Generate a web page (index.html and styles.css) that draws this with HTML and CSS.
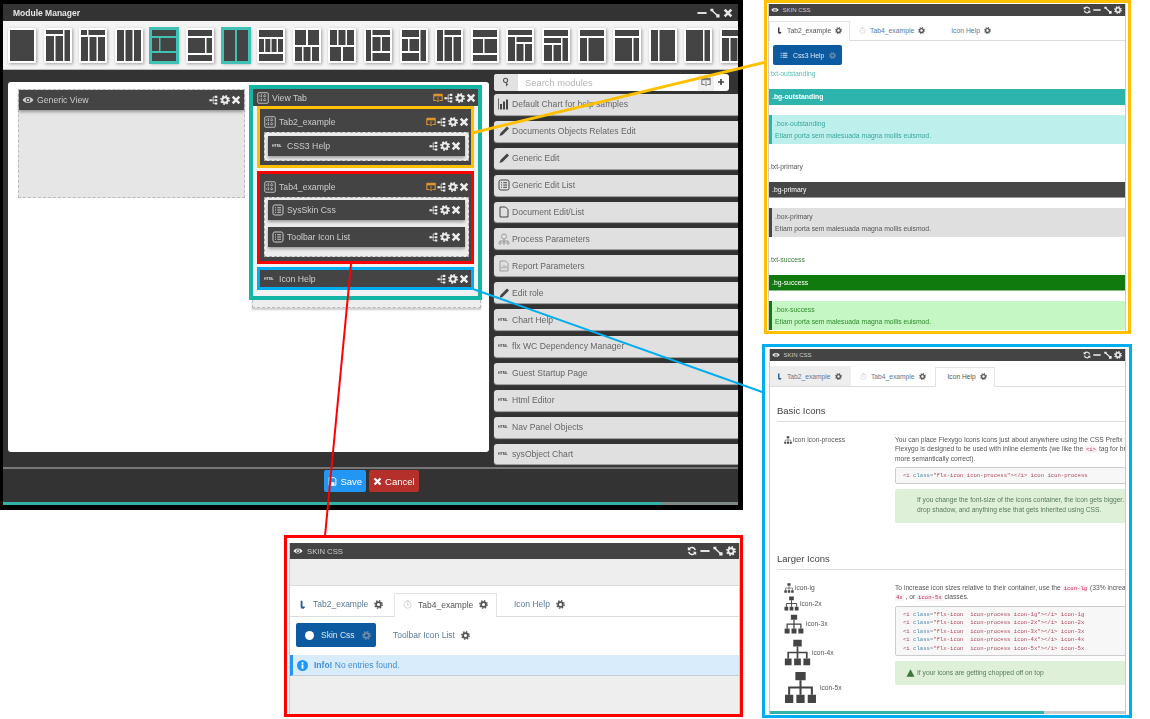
FILE: index.html
```html
<!DOCTYPE html>
<html lang="en">
<head>
  <meta charset="UTF-8">
  <title>Module Manager</title>
  <link rel="stylesheet" href="styles.css">
</head>
<body>
  <!-- shared icons -->
  <svg class="defs" aria-hidden="true">
    <symbol id="gear" viewBox="0 0 24 24"><circle cx="12" cy="12" r="6.5" fill="none" stroke="currentColor" stroke-width="4.5"/><circle cx="12" cy="12" r="9.8" fill="none" stroke="currentColor" stroke-width="4" stroke-dasharray="3.8 3.9"/></symbol>
    <symbol id="tree" viewBox="0 0 24 24"><path d="M1 10h6v5H1zM14 2h6v5h-6zM14 10h6v5h-6zM14 18h6v5h-6z" fill="currentColor"/><path d="M7 12.500h7M10 4.500v16M10 4.500h4M10 20.500h4" fill="none" stroke="currentColor" stroke-width="1.800"/></symbol>
    <symbol id="close" viewBox="0 0 24 24"><path d="M4 4l16 16M20 4L4 20" stroke="currentColor" stroke-width="6" fill="none"/></symbol>
    <symbol id="eye" viewBox="0 0 24 24"><path d="M1 12c5-8 17-8 22 0-5 8-17 8-22 0z" fill="currentColor"/><circle cx="12" cy="12" r="4.500" fill="#444"/><circle cx="12" cy="12" r="2.500" fill="currentColor"/></symbol>
    <symbol id="list" viewBox="0 0 24 24"><rect x="2" y="2" width="20" height="20" rx="3.500" fill="none" stroke="currentColor" stroke-width="2"/><path d="M6 7.500h2M10.500 7.500H18M6 12h2M10.500 12H18M6 16.500h2M10.500 16.500H18" stroke="currentColor" stroke-width="2.200"/></symbol>
    <symbol id="tab" viewBox="0 0 24 24"><rect x="1.500" y="1.500" width="21" height="21" rx="2" fill="none" stroke="currentColor" stroke-width="1.800"/><path d="M8.500 4v16M15.500 4v16M4 8h16M4 16h16" stroke="currentColor" stroke-width="1.800" stroke-dasharray="2.500 1.500"/></symbol>
    <symbol id="tabadd" viewBox="0 0 24 24"><path d="M2 3h20v15h-5M7 18H2V3" fill="none" stroke="currentColor" stroke-width="2.500"/><path d="M2 3h20v5H2z" fill="currentColor"/><path d="M12 10v11M8 17l4 4 4-4" fill="none" stroke="currentColor" stroke-width="2"/></symbol>
    <symbol id="pencil" viewBox="0 0 24 24"><path d="M3 22l2-6L18 3l4 4L9 20z" fill="currentColor"/></symbol>
    <symbol id="chart" viewBox="0 0 24 24"><path d="M1 23V1" stroke="currentColor" stroke-width="1.500" fill="none"/><path d="M4 12h4v11H4zM10 7h4v16h-4zM16 3h4v20h-4z" fill="currentColor"/></symbol>
    <symbol id="doc" viewBox="0 0 24 24"><path d="M4 2h11l5 5v15H4z" fill="none" stroke="currentColor" stroke-width="2" stroke-linejoin="round"/></symbol>
    <symbol id="proc" viewBox="0 0 24 24"><circle cx="12" cy="7" r="5" fill="none" stroke="currentColor" stroke-width="1.500"/><path d="M12 12v4M4 16h16M4 16v2M20 16v2M12 16v2" stroke="currentColor" stroke-width="1.500" fill="none"/><path d="M2 18h4v4H2zM10 18h4v4h-4zM18 18h4v4h-4z" fill="none" stroke="currentColor" stroke-width="1.200"/></symbol>
    <symbol id="report" viewBox="0 0 24 24"><path d="M4 2h11l5 5v15H4z" fill="none" stroke="currentColor" stroke-width="1.500"/><path d="M8 17v-4M12 17v-7M16 17v-5" stroke="currentColor" stroke-width="1.500"/></symbol>
    <symbol id="key" viewBox="0 0 24 24"><circle cx="11" cy="8" r="5" fill="none" stroke="currentColor" stroke-width="2.500"/><path d="M12 13l2 9M14 18l3-1" stroke="currentColor" stroke-width="2.500" fill="none"/></symbol>
    <symbol id="plus" viewBox="0 0 24 24"><path d="M12 3v18M3 12h18" stroke="currentColor" stroke-width="5"/></symbol>
    <symbol id="refresh" viewBox="0 0 24 24"><path d="M20 10a8.500 8.500 0 0 0-15-3M4 14a8.500 8.500 0 0 0 15 3" fill="none" stroke="currentColor" stroke-width="3.500"/><path d="M2 2v8h8zM22 22v-8h-8z" fill="currentColor"/></symbol>
    <symbol id="minus" viewBox="0 0 24 24"><path d="M1 12h22" stroke="currentColor" stroke-width="4.500"/></symbol>
    <symbol id="expand" viewBox="0 0 24 24"><path d="M3 4l18 17" stroke="currentColor" stroke-width="3.500"/><path d="M1 2h7v6H1zM15 15h8v8h-8z" fill="currentColor"/></symbol>
    <symbol id="org" viewBox="0 0 32 32"><path d="M11 1h10v8H11zM1 23h8v8H1zM12 23h8v8h-8zM23 23h8v8h-8z" fill="currentColor"/><path d="M16 9v14M5 23v-7h22v7" fill="none" stroke="currentColor" stroke-width="2"/></symbol>
    <symbol id="tuning" viewBox="0 0 24 24"><path d="M7 2h5v15h5l-2-2 4 4-4 4h-3a5 5 0 0 1-5-5z" fill="currentColor"/></symbol>
    <symbol id="clock" viewBox="0 0 24 24"><circle cx="12" cy="13" r="9" fill="none" stroke="currentColor" stroke-width="2"/><path d="M12 8v5h4M8 2h8" stroke="currentColor" stroke-width="2" fill="none"/></symbol>
    <symbol id="floppy" viewBox="0 0 24 24"><path d="M3 2h15l3 3v17H3z" fill="none" stroke="currentColor" stroke-width="2.500"/><path d="M7 14h10v8H7z" fill="currentColor"/></symbol>
    <symbol id="rows" viewBox="0 0 24 24"><path d="M2 5h3v3H2zM2 11h3v3H2zM2 17h3v3H2zM8 5h14v3H8zM8 11h14v3H8zM8 17h14v3H8z" fill="currentColor"/></symbol>
  </svg>

  <!-- main window -->
  <div class="frame">
    <div class="shell">
      <div class="shell-title">
        <span class="shell-name">Module Manager</span>
        <svg class="ic ic-title"><use href="#minus"/></svg>
        <svg class="ic ic-title"><use href="#expand"/></svg>
        <svg class="ic ic-title"><use href="#close"/></svg>
      </div>

      <div class="thumbs">
        <svg class="thumb" viewBox="0 0 28 35"><path d="M2 2h24v31H2z"/></svg>
        <svg class="thumb" viewBox="0 0 28 35"><path d="M2 2h17v4H2zM2 8h8v25H2zM11.500 8H19v25h-7.500zM20.500 2H26v31h-5.500z"/></svg>
        <svg class="thumb" viewBox="0 0 28 35"><path d="M2 2h6v5H2zM9.500 2H26v5H9.500zM2 9h7v24H2zM10.500 9h7v24h-7zM19 9h7v24h-7z"/></svg>
        <svg class="thumb" viewBox="0 0 28 35"><path d="M2 2h7v31H2zM10.500 2h7v31h-7zM19 2h7v31h-7z"/></svg>
        <svg class="thumb thumb-on" viewBox="0 0 28 35"><path d="M2 2h24v6H2zM2 10h7v13H2zM10.500 10H26v13H10.500zM2 25h24v8H2z"/></svg>
        <svg class="thumb" viewBox="0 0 28 35"><path d="M2 2h24v6H2zM2 10h17v15H2zM20.500 10H26v15h-5.500zM2 27h24v6H2z"/></svg>
        <svg class="thumb thumb-on" viewBox="0 0 28 35"><path d="M2 2h11v31H2zM15 2h11v31H15z"/></svg>
        <svg class="thumb" viewBox="0 0 28 35"><path d="M2 2h24v7H2zM2 11h5v13H2zM8.300 11h5v13h-5zM14.600 11h5v13h-5zM21 11h5v13h-5zM2 26h24v7H2z"/></svg>
        <svg class="thumb" viewBox="0 0 28 35"><path d="M2 2h11v15H2zM15 2h11v15H15zM2 19h7v14H2zM10.500 19h7v14h-7zM19 19h7v14h-7z"/></svg>
        <svg class="thumb" viewBox="0 0 28 35"><path d="M2 2h7v15H2zM10.500 2h7v15h-7zM19 2h7v15h-7zM2 19h11v14H2zM15 19h11v14H15z"/></svg>
        <svg class="thumb" viewBox="0 0 28 35"><path d="M2 2h5v31H2zM8.500 2H26v5H8.500zM8.500 9h8v14h-8zM18 9h8v14h-8zM8.500 25H26v8H8.500z"/></svg>
        <svg class="thumb" viewBox="0 0 28 35"><path d="M2 2h17v7H2zM20.500 2H26v31h-5.500zM2 11h6v12H2zM9.500 11H19v12H9.500zM2 25h17v8H2z"/></svg>
        <svg class="thumb" viewBox="0 0 28 35"><path d="M2 2h6v31H2zM9.500 2H26v5H9.500zM9.500 9H17v24H9.500zM18.500 9H26v24h-7.500z"/></svg>
        <svg class="thumb" viewBox="0 0 28 35"><path d="M2 2h24v7H2zM2 11h10v14H2zM13.500 11H26v14H13.500zM2 27h24v6H2z"/></svg>
        <svg class="thumb" viewBox="0 0 28 35"><path d="M2 2h24v5H2zM2 9h7v24H2zM10.500 9H26v5H10.500zM10.500 16h7v17h-7zM19 16h7v17h-7z"/></svg>
        <svg class="thumb" viewBox="0 0 28 35"><path d="M2 2h24v6H2zM2 10h17v5H2zM2 17h8v16H2zM11.500 17H19v16h-7.500zM20.500 10H26v23h-5.500z"/></svg>
        <svg class="thumb" viewBox="0 0 28 35"><path d="M2 2h24v6H2zM2 10h7v23H2zM10.500 10H26v23H10.500z"/></svg>
        <svg class="thumb" viewBox="0 0 28 35"><path d="M2 2h24v6H2zM2 10h17v23H2zM20.500 10H26v23h-5.500z"/></svg>
        <svg class="thumb" viewBox="0 0 28 35"><path d="M2 2h7v31H2zM10.500 2H26v31H10.500z"/></svg>
        <svg class="thumb" viewBox="0 0 28 35"><path d="M2 2h17v31H2zM20.500 2H26v31h-5.500z"/></svg>
        <svg class="thumb" viewBox="0 0 28 35"><path d="M2 2h24v6H2zM2 10h7v23H2zM10.500 10h7v23h-7zM19 10h7v23h-7z"/></svg>
      </div>

      <div class="shell-body">
        <div class="canvas">
          <div class="generic">
            <div class="mod">
              <svg class="ic ic-mod"><use href="#eye"/></svg>
              <span class="mod-name">Generic View</span>
              <svg class="ic ic-tool"><use href="#tree"/></svg>
              <svg class="ic ic-tool"><use href="#gear"/></svg>
              <svg class="ic ic-tool"><use href="#close"/></svg>
            </div>
          </div>

          <div class="view-col">
            <div class="view-tab">
              <div class="mod mod-head">
                <svg class="ic ic-mod"><use href="#tab"/></svg>
                <span class="mod-name">View Tab</span>
                <svg class="ic ic-tool ic-orange"><use href="#tabadd"/></svg>
                <svg class="ic ic-tool"><use href="#tree"/></svg>
                <svg class="ic ic-tool"><use href="#gear"/></svg>
                <svg class="ic ic-tool"><use href="#close"/></svg>
              </div>

              <div class="mark mark-orange">
                <div class="mod mod-head mod-tall">
                  <svg class="ic ic-mod"><use href="#tab"/></svg>
                  <span class="mod-name">Tab2_example</span>
                  <svg class="ic ic-tool ic-orange"><use href="#tabadd"/></svg>
                  <svg class="ic ic-tool"><use href="#tree"/></svg>
                  <svg class="ic ic-tool"><use href="#gear"/></svg>
                  <svg class="ic ic-tool"><use href="#close"/></svg>
                </div>
                <div class="drop drop-one">
                  <div class="mod mod-inner">
                    <span class="html-ic">HTML</span>
                    <span class="mod-name">CSS3 Help</span>
                    <svg class="ic ic-tool"><use href="#tree"/></svg>
                    <svg class="ic ic-tool"><use href="#gear"/></svg>
                    <svg class="ic ic-tool"><use href="#close"/></svg>
                  </div>
                </div>
              </div>

              <div class="mark mark-red">
                <div class="mod mod-head mod-tall">
                  <svg class="ic ic-mod"><use href="#tab"/></svg>
                  <span class="mod-name">Tab4_example</span>
                  <svg class="ic ic-tool ic-orange"><use href="#tabadd"/></svg>
                  <svg class="ic ic-tool"><use href="#tree"/></svg>
                  <svg class="ic ic-tool"><use href="#gear"/></svg>
                  <svg class="ic ic-tool"><use href="#close"/></svg>
                </div>
                <div class="drop drop-two">
                  <div class="mod mod-inner">
                    <svg class="ic ic-mod"><use href="#list"/></svg>
                    <span class="mod-name">SysSkin Css</span>
                    <svg class="ic ic-tool"><use href="#tree"/></svg>
                    <svg class="ic ic-tool"><use href="#gear"/></svg>
                    <svg class="ic ic-tool"><use href="#close"/></svg>
                  </div>
                  <div class="mod mod-inner">
                    <svg class="ic ic-mod"><use href="#list"/></svg>
                    <span class="mod-name">Toolbar Icon List</span>
                    <svg class="ic ic-tool"><use href="#tree"/></svg>
                    <svg class="ic ic-tool"><use href="#gear"/></svg>
                    <svg class="ic ic-tool"><use href="#close"/></svg>
                  </div>
                </div>
              </div>

              <div class="mark mark-blue">
                <div class="mod mod-head">
                  <span class="html-ic">HTML</span>
                  <span class="mod-name">Icon Help</span>
                  <svg class="ic ic-tool"><use href="#tree"/></svg>
                  <svg class="ic ic-tool"><use href="#gear"/></svg>
                  <svg class="ic ic-tool"><use href="#close"/></svg>
                </div>
              </div>
            </div>
            <div class="view-foot"></div>
          </div>
        </div>

        <div class="modules">
          <div class="search">
            <span class="search-key"><svg class="ic ic-key"><use href="#key"/></svg></span>
            <span class="search-input">Search modules</span>
            <span class="search-btn"><svg class="ic ic-key"><use href="#tabadd"/></svg></span>
            <span class="search-plus"><svg class="ic ic-plus"><use href="#plus"/></svg></span>
          </div>
          <div class="item"><svg class="ic ic-item"><use href="#chart"/></svg>Default Chart for help samples</div>
          <div class="item"><svg class="ic ic-item"><use href="#pencil"/></svg>Documents Objects Relates Edit</div>
          <div class="item"><svg class="ic ic-item"><use href="#pencil"/></svg>Generic Edit</div>
          <div class="item"><svg class="ic ic-item"><use href="#list"/></svg>Generic Edit List</div>
          <div class="item"><svg class="ic ic-item"><use href="#doc"/></svg>Document Edit/List</div>
          <div class="item"><svg class="ic ic-item ic-pale"><use href="#proc"/></svg>Process Parameters</div>
          <div class="item"><svg class="ic ic-item ic-pale"><use href="#report"/></svg>Report Parameters</div>
          <div class="item"><svg class="ic ic-item"><use href="#pencil"/></svg>Edit role</div>
          <div class="item"><span class="html-ic html-dark">HTML</span>Chart Help</div>
          <div class="item"><span class="html-ic html-dark">HTML</span>flx WC Dependency Manager</div>
          <div class="item"><span class="html-ic html-dark">HTML</span>Guest Startup Page</div>
          <div class="item"><span class="html-ic html-dark">HTML</span>Html Editor</div>
          <div class="item"><span class="html-ic html-dark">HTML</span>Nav Panel Objects</div>
          <div class="item"><span class="html-ic html-dark">HTML</span>sysObject Chart</div>
        </div>
      </div>

      <div class="shell-foot">
        <button class="btn btn-save"><svg class="ic ic-btn"><use href="#floppy"/></svg>Save</button>
        <button class="btn btn-cancel"><svg class="ic ic-btn"><use href="#close"/></svg>Cancel</button>
      </div>
      <div class="progress"><div class="progress-main"></div></div>
    </div>
  </div>

  <!-- callout lines -->
  <svg class="lines" viewBox="0 0 1150 719">
    <path d="M472 133L766 62" stroke="#ffc000" stroke-width="3"/>
    <path d="M473 289L765 393" stroke="#00aeef" stroke-width="2"/>
    <path d="M351 264L325 536" stroke="#ff0000" stroke-width="2"/>
  </svg>

  <!-- orange callout -->
  <div class="callout callout-orange">
    <div class="skin skin-sm">
      <div class="skin-bar">
        <svg class="ic ic-eye"><use href="#eye"/></svg>
        <span class="skin-name">SKIN CSS</span>
        <svg class="ic ic-win"><use href="#refresh"/></svg>
        <svg class="ic ic-win"><use href="#minus"/></svg>
        <svg class="ic ic-win"><use href="#expand"/></svg>
        <svg class="ic ic-win"><use href="#gear"/></svg>
      </div>
      <div class="tabs">
        <div class="tab tab-on tab-first"><svg class="ic ic-tab ic-dark"><use href="#tuning"/></svg>Tab2_example<svg class="ic ic-cog"><use href="#gear"/></svg></div>
        <div class="tab"><svg class="ic ic-tab ic-clock"><use href="#clock"/></svg>Tab4_example<svg class="ic ic-cog"><use href="#gear"/></svg></div>
        <div class="tab tab-plain">Icon Help<svg class="ic ic-cog"><use href="#gear"/></svg></div>
      </div>
      <button class="css-btn"><svg class="ic ic-rows"><use href="#rows"/></svg>Css3 Help<svg class="ic ic-cog ic-dim"><use href="#gear"/></svg></button>
      <p class="txt txt-out txt-first">.txt-outstanding</p>
      <div class="bg bg-out">.bg-outstanding</div>
      <div class="box box-out"><span>.box-outstanding</span><span>Etiam porta sem malesuada magna mollis euismod.</span></div>
      <p class="txt txt-pri">.txt-primary</p>
      <div class="bg bg-pri">.bg-primary</div>
      <div class="box box-pri"><span>.box-primary</span><span>Etiam porta sem malesuada magna mollis euismod.</span></div>
      <p class="txt txt-suc">.txt-success</p>
      <div class="bg bg-suc">.bg-success</div>
      <div class="box box-suc"><span>.box-success</span><span>Etiam porta sem malesuada magna mollis euismod.</span></div>
    </div>
  </div>

  <!-- blue callout -->
  <div class="callout callout-blue">
    <div class="skin skin-sm skin-help">
      <div class="skin-bar">
        <svg class="ic ic-eye"><use href="#eye"/></svg>
        <span class="skin-name">SKIN CSS</span>
        <svg class="ic ic-win"><use href="#refresh"/></svg>
        <svg class="ic ic-win"><use href="#minus"/></svg>
        <svg class="ic ic-win"><use href="#expand"/></svg>
        <svg class="ic ic-win"><use href="#gear"/></svg>
      </div>
      <div class="tabs tabs-help">
        <div class="tab tab-gray tab-first"><svg class="ic ic-tab ic-blue"><use href="#tuning"/></svg>Tab2_example<svg class="ic ic-cog"><use href="#gear"/></svg></div>
        <div class="tab"><svg class="ic ic-tab ic-clock"><use href="#clock"/></svg>Tab4_example<svg class="ic ic-cog"><use href="#gear"/></svg></div>
        <div class="tab tab-on tab-help">Icon Help<svg class="ic ic-cog"><use href="#gear"/></svg></div>
      </div>
      <div class="help">
        <h2 class="help-head help-basic">Basic Icons</h2>
        <div class="help-row">
          <div class="help-left"><div class="sample"><svg class="ic ic-s0"><use href="#org"/></svg>icon icon-process</div></div>
          <div class="help-right">
            <p class="copy">You can place Flexygo Icons icons just about anywhere using the CSS Prefix<br>Flexygo is designed to be used with inline elements (we like the <code class="tag">&lt;i&gt;</code> tag for br<br>more semantically correct).</p>
            <pre class="code code-one"><b>&lt;i</b> <em>class</em>=<b>"flx-icon icon-process"</b><b>&gt;&lt;/i&gt;</b> <b>icon icon-process</b></pre>
            <div class="note note-one">If you change the font-size of the icons container, the icon gets bigger.<br>drop shadow, and anything else that gets inherited using CSS.</div>
          </div>
        </div>
        <h2 class="help-head help-larger">Larger Icons</h2>
        <div class="help-row">
          <div class="help-left">
            <div class="sample sample-lg"><svg class="ic ic-s1"><use href="#org"/></svg>icon-lg</div>
            <div class="sample sample-2x"><svg class="ic ic-s2"><use href="#org"/></svg>icon-2x</div>
            <div class="sample sample-3x"><svg class="ic ic-s3"><use href="#org"/></svg>icon-3x</div>
            <div class="sample sample-4x"><svg class="ic ic-s4"><use href="#org"/></svg>icon-4x</div>
            <div class="sample sample-5x"><svg class="ic ic-s5"><use href="#org"/></svg>icon-5x</div>
          </div>
          <div class="help-right">
            <p class="copy">To increase icon sizes relative to their container, use the <code class="tag">icon-lg</code> (33% increa<br><code class="tag">4x</code> , or <code class="tag">icon-5x</code> classes.</p>
            <pre class="code code-five"><b>&lt;i</b> <em>class</em>=<b>"flx-icon  icon-process icon-1g"</b><b>&gt;&lt;/i&gt;</b> <b>icon-1g</b>
<b>&lt;i</b> <em>class</em>=<b>"flx-icon  icon-process icon-2x"</b><b>&gt;&lt;/i&gt;</b> <b>icon-2x</b>
<b>&lt;i</b> <em>class</em>=<b>"flx-icon  icon-process icon-3x"</b><b>&gt;&lt;/i&gt;</b> <b>icon-3x</b>
<b>&lt;i</b> <em>class</em>=<b>"flx-icon  icon-process icon-4x"</b><b>&gt;&lt;/i&gt;</b> <b>icon-4x</b>
<b>&lt;i</b> <em>class</em>=<b>"flx-icon  icon-process icon-5x"</b><b>&gt;&lt;/i&gt;</b> <b>icon-5x</b></pre>
            <div class="note note-two"><svg class="ic ic-warn" viewBox="0 0 24 22"><path d="M12 1l11 20H1z" fill="#3c763d"/></svg>If your icons are getting chopped off on top</div>
          </div>
        </div>
      </div>
      <div class="scroll"><div class="scroll-main"></div></div>
    </div>
  </div>

  <!-- red callout -->
  <div class="callout callout-red">
    <div class="skin skin-lg">
      <div class="skin-bar">
        <svg class="ic ic-eye"><use href="#eye"/></svg>
        <span class="skin-name">SKIN CSS</span>
        <svg class="ic ic-win"><use href="#refresh"/></svg>
        <svg class="ic ic-win"><use href="#minus"/></svg>
        <svg class="ic ic-win"><use href="#expand"/></svg>
        <svg class="ic ic-win"><use href="#gear"/></svg>
      </div>
      <div class="gray-band"></div>
      <div class="tabs tabs-big">
        <div class="tab"><svg class="ic ic-tab ic-blue"><use href="#tuning"/></svg>Tab2_example<svg class="ic ic-cog"><use href="#gear"/></svg></div>
        <div class="tab tab-on"><svg class="ic ic-tab ic-clock"><use href="#clock"/></svg>Tab4_example<svg class="ic ic-cog"><use href="#gear"/></svg></div>
        <div class="tab tab-plain">Icon Help<svg class="ic ic-cog"><use href="#gear"/></svg></div>
      </div>
      <div class="pills">
        <button class="css-btn css-btn-big"><span class="dot"></span>Skin Css<svg class="ic ic-cog ic-dim"><use href="#gear"/></svg></button>
        <span class="pill-link">Toolbar Icon List<svg class="ic ic-cog"><use href="#gear"/></svg></span>
      </div>
      <div class="info">
        <svg class="ic ic-info" viewBox="0 0 24 24"><circle cx="12" cy="12" r="12" fill="#2196f3"/><path d="M10 10h4v9h-4zM10 5h4v3h-4z" fill="#fff"/></svg>
        <span><strong>Info!</strong> No entries found.</span>
      </div>
    </div>
  </div>
</body>
</html>
```

FILE: styles.css
```css
* {
  box-sizing: border-box;
}

body {
  margin: 0;
  width: 1150px;
  height: 719px;
  overflow: hidden;
  position: relative;
  background: #fff;
  font-family: "Liberation Sans", Arial, sans-serif;
}

.defs {
  position: absolute;
  width: 0;
  height: 0;
}

.ic {
  display: block;
  flex: none;
}

/* main window */
.frame {
  position: absolute;
  left: 0;
  top: 0;
  width: 743px;
  height: 510px;
  background: #000;
  padding: 4px 5px 5px 3px;
}

.shell {
  height: 100%;
  display: flex;
  flex-direction: column;
  background: #333;
  filter: blur(0.35px);
}

.shell-title {
  height: 17px;
  display: flex;
  align-items: center;
  gap: 3px;
  padding: 0 5px 0 10px;
  color: #e8e8e8;
  flex: none;
}

.shell-name {
  flex: 1;
  font-size: 8.5px;
  font-weight: bold;
}

.ic-title {
  width: 10px;
  height: 10px;
}

.thumbs {
  height: 49px;
  flex: none;
  display: flex;
  gap: 7.6px;
  padding: 7px 0 0 5px;
  background: #f4f4f4;
  border-bottom: 1px solid #bbb;
  overflow: hidden;
}

.thumb {
  flex: none;
  width: 28px;
  height: 35px;
  background: #fff;
  fill: #444;
  box-shadow: 1px 1px 3px rgba(0, 0, 0, 0.35);
}

.thumb-on {
  outline: 1px solid #3fc1b4;
  background: #3fc1b4;
}

.shell-body {
  flex: 1;
  display: flex;
  padding: 4px 0 0 5px;
  min-height: 0;
}

.canvas {
  width: 481px;
  height: 370px;
  margin: 8px 5px 0 0;
  flex: none;
  display: flex;
  gap: 4px;
  padding: 3px 0 0 10px;
  background: #fff;
  border-radius: 3px;
}

.generic {
  width: 227px;
  height: 109px;
  margin-top: 4px;
  background: #e6e6e6;
  border: 1px dashed #bbb;
}

.mod {
  height: 20px;
  display: flex;
  align-items: center;
  gap: 1px;
  padding: 0 3px;
  background: #444;
  color: #ccc;
  font-size: 8.7px;
  box-shadow: 0 2px 3px rgba(0, 0, 0, 0.35);
}

.mod-name {
  flex: 1;
  white-space: nowrap;
  margin-left: 2px;
}

.mod-head {
  height: 17px;
  padding: 0 2px 0 4px;
  box-shadow: none;
}

.mod-tall {
  height: 23px;
  padding-top: 3px;
}

.mod-inner {
  padding: 0 4px 0 4px;
  margin-bottom: 7px;
}

.ic-mod {
  width: 12px;
  height: 12px;
}

.ic-tool {
  width: 10px;
  height: 10px;
  color: #eee;
}

.ic-orange {
  color: #e2952c;
}

.html-ic {
  flex: none;
  width: 11px;
  overflow: hidden;
  font-size: 3.5px;
  font-weight: bold;
  color: #ddd;
  line-height: 4px;
  margin-right: 1px;
}

.html-dark {
  color: #444;
}

.view-col {
  width: 233px;
}

.view-tab {
  height: 215px;
  border: 4px solid #13b5a4;
  background: #f2f2f2;
}

.view-foot {
  width: 229px;
  height: 8px;
  margin-left: 3px;
  border: 1px dashed #bbb;
  border-top: 0;
  background: #ededed;
  box-shadow: 0 2px 2px rgba(0, 0, 0, 0.2);
}

.mark {
  margin: 0 4px 3px 4px;
  border: 3px solid #000;
  background: #444;
}

.mark-orange {
  height: 62px;
  border-color: #ffc000;
}

.mark-red {
  height: 93px;
  border-color: #ff0000;
}

.mark-blue {
  height: 23px;
  border-color: #00aeef;
}

.drop {
  margin: 0 2px 4px 4px;
  background: #ededed;
  border: 1px dashed #aaa;
  padding: 2px 3px 0;
}

.drop-one {
  height: 29px;
  padding-top: 3px;
}

.drop-two {
  height: 60px;
}

/* module list */
.modules {
  flex: 1;
  min-width: 0;
}

.search {
  display: flex;
  width: 235px;
  height: 17px;
  margin-bottom: 3px;
  background: #fff;
  border-radius: 3px;
  overflow: hidden;
  font-size: 9.4px;
}

.search-key {
  width: 24px;
  background: #e2e2e2;
  padding: 3px 0 0 7px;
  color: #555;
}

.search-input {
  width: 180px;
  padding: 3px 0 0 7px;
  color: #b5b5b5;
}

.search-btn {
  width: 16px;
  padding: 3px 0 0 3px;
  background: #f0f0f0;
  color: #777;
}

.search-plus {
  width: 15px;
  padding: 4px 0 0 3px;
  color: #444;
}

.ic-key {
  width: 10px;
  height: 10px;
}

.ic-plus {
  width: 8px;
  height: 8px;
}

.item {
  height: 20.9px;
  margin-bottom: 6px;
  display: flex;
  align-items: center;
  gap: 2px;
  padding-left: 4px;
  background: #e0e0e0;
  border-radius: 3px 0 0 3px;
  color: #666;
  font-size: 8.6px;
  white-space: nowrap;
  box-shadow: 0 1px 1px #aaa;
}

.ic-item {
  width: 12px;
  height: 12px;
  color: #444;
}

.ic-pale {
  color: #888;
}

.shell-foot {
  height: 35px;
  flex: none;
  display: flex;
  justify-content: center;
  gap: 3px;
  padding: 1px 0 0 2px;
  border-top: 2px solid #777;
  background: #333;
}

.btn {
  height: 22px;
  display: flex;
  align-items: center;
  gap: 3px;
  padding: 0 4px;
  border: 0;
  border-radius: 2px;
  color: #fff;
  font-family: inherit;
  font-size: 9.5px;
}

.btn-save {
  background: #2196f3;
}

.btn-cancel {
  background: #b5302a;
}

.ic-btn {
  width: 9px;
  height: 9px;
}

.progress {
  height: 3px;
  flex: none;
  background: #7d8a88;
}

.progress-main {
  width: 658px;
  height: 3px;
  background: #33b2a8;
}

/* callouts */
.lines {
  position: absolute;
  left: 0;
  top: 0;
  width: 1150px;
  height: 719px;
  fill: none;
}

.callout {
  position: absolute;
  overflow: hidden;
  background: #fff;
  border: 3px solid;
}

.callout-orange {
  left: 764px;
  top: 0;
  width: 367px;
  height: 334px;
  border-color: #ffc000;
  padding: 1px 0 0 1px;
}

.callout-blue {
  left: 762px;
  top: 344px;
  width: 370px;
  height: 374px;
  border-color: #00aeef;
  padding: 2px 4px 0 4px;
}

.callout-red {
  left: 284px;
  top: 535px;
  width: 459px;
  height: 182px;
  border-color: #ff0000;
  background: #fff;
  padding: 5px 0 0 2px;
}

.skin {
  height: 100%;
  border-left: 1px solid #ccc;
  border-right: 1px solid #ccc;
  filter: blur(0.35px);
  font-size: 6.8px;
  color: #555;
  width: 358px;
  overflow: hidden;
}

.skin-help {
  width: 357px;
  font-size: 6.7px;
}

.skin-lg {
  width: 451px;
  font-size: 8.5px;
  background: #eee;
}

.skin-bar {
  height: 12px;
  display: flex;
  align-items: center;
  gap: 2.5px;
  padding: 0 3px 0 2px;
  background: #444;
  color: #eee;
  font-size: 6px;
}

.skin-lg .skin-bar {
  height: 16px;
  gap: 3px;
  padding: 0 3px 0 3px;
  font-size: 7.7px;
}

.skin-name {
  flex: 1;
  margin-left: 1px;
  color: #ccc;
}

.ic-eye {
  width: 8px;
  height: 8px;
}

.ic-win {
  width: 8px;
  height: 8px;
}

.skin-lg .ic-win {
  width: 10px;
  height: 10px;
}

.skin-lg .ic-eye {
  width: 10px;
  height: 10px;
}

.tabs {
  height: 25px;
  display: flex;
  align-items: flex-end;
  padding-top: 5px;
  border-bottom: 1px solid #ddd;
  background: #fff;
}

.tab {
  height: 20px;
  display: flex;
  align-items: center;
  gap: 4px;
  padding: 0 9px;
  color: #5b7a99;
  white-space: nowrap;
}

.tab-first {
  width: 81px;
  padding: 0 6px;
}

.tab-on {
  position: relative;
  top: 1px;
  background: #fff;
  border: 1px solid #e4e4e4;
  border-bottom: 0;
  color: #555;
  padding-bottom: 2px;
}

.tab-plain {
  padding-left: 17px;
}

.tab-gray {
  background: #eee;
}

.tab-help {
  padding: 0 7px 2px 12px;
}

.tabs-help {
  height: 26px;
}

.tabs-big {
  height: 31px;
  padding-top: 0;
}

.tabs-big .tab {
  height: 24px;
  padding: 0 8px;
  gap: 6px;
}

.tabs-big .tab:first-child {
  width: 104px;
}

.tabs-big .tab-on {
  width: 103px;
  padding-bottom: 2px;
}

.tabs-big .tab-plain {
  padding-left: 17px;
}

.ic-tab {
  width: 7px;
  height: 7px;
}

.ic-dark {
  color: #333;
}

.ic-blue {
  color: #2a5f94;
}

.ic-clock {
  color: #ccc;
}

.ic-cog {
  width: 7px;
  height: 7px;
  color: #555;
}

.tabs-big .ic-tab,
.tabs-big .ic-cog {
  width: 9px;
  height: 9px;
}

.css-btn {
  display: flex;
  align-items: center;
  gap: 5px;
  width: 69px;
  height: 20px;
  margin: 4px 0 0 4px;
  padding: 0 0 0 7px;
  border: 0;
  border-radius: 2px;
  background: #0c5ba0;
  color: #d8e6f3;
  font-family: inherit;
  font-size: 6.8px;
  white-space: nowrap;
}

.ic-rows {
  width: 8px;
  height: 8px;
}

.ic-cog.ic-dim {
  color: #6d8ba8;
}

.txt {
  height: 10px;
  margin: 18px 0 0;
  line-height: 10px;
}

.txt-first {
  margin-top: 4px;
}

.txt-out {
  color: #5bbcb2;
}

.txt-pri {
  color: #555;
}

.txt-suc {
  color: #3a7a3a;
}

.bg {
  height: 16px;
  margin-top: 10px;
  padding-left: 3px;
  line-height: 16px;
  color: #fff;
}

.bg-out {
  background: #2db5ad;
  font-weight: bold;
}

.bg-pri {
  background: #474747;
  border-bottom: 1px solid #999;
}

.bg-suc {
  background: #107a0e;
  border-bottom: 1px solid #8ab98a;
}

.box {
  height: 29px;
  margin-top: 10px;
  padding: 4px 0 0 3px;
  border-left: 3px solid;
  display: flex;
  flex-direction: column;
  gap: 3px;
  line-height: 9px;
}

.box-out {
  background: #bdf0ec;
  border-color: #2db5ad;
  color: #3ca59c;
}

.box-pri {
  background: #dfdfdf;
  border-color: #474747;
  color: #555;
}

.box-suc {
  background: #c5f7c4;
  border-color: #107a0e;
  color: #2f8a2e;
}

/* icon help */
.help {
  height: 324px;
  padding: 0 0 0 7px;
  overflow: hidden;
  white-space: nowrap;
}

.help-head {
  margin: 0;
  font-size: 9.5px;
  font-weight: normal;
  line-height: 12px;
  color: #444;
  border-bottom: 1px solid #ddd;
  height: 17px;
}

.help-basic {
  margin-top: 18px;
}

.help-larger {
  margin-top: 30px;
}

.help-row {
  display: flex;
  padding-top: 12.5px;
}

.help-left {
  width: 118px;
  flex: none;
  padding-left: 7px;
  color: #555;
}

.sample {
  display: flex;
  align-items: center;
  gap: 1px;
  height: 10px;
}

.sample-lg {
  height: 10px;
}

.sample-2x {
  height: 14px;
  margin-top: 4px;
}

.sample-3x {
  height: 18px;
  margin-top: 4px;
}

.sample-4x {
  height: 26px;
  margin-top: 7px;
}

.sample-5x {
  height: 31px;
  margin-top: 6px;
}

.ic-s0 { width: 8px; height: 8px; color: #444; }
.ic-s1 { width: 10px; height: 10px; color: #444; }
.ic-s2 { width: 15px; height: 15px; color: #444; }
.ic-s3 { width: 20px; height: 20px; color: #444; margin-right: 1px; }
.ic-s4 { width: 27px; height: 27px; color: #444; }
.ic-s5 { width: 33px; height: 33px; color: #444; margin-right: 2px; }

.help-right {
  flex: none;
  width: 230px;
  overflow: hidden;
}

.copy {
  margin: 0;
  line-height: 9.5px;
  color: #555;
}

.tag {
  padding: 0 1px;
  background: #f9f2f4;
  color: #c7254e;
  font-family: "Liberation Mono", monospace;
  font-size: 5.6px;
  line-height: 0;
}

.code {
  margin: 4px -4px 0 0;
  padding: 4px 7px;
  background: #f7f7f7;
  border: 1px solid #ccc;
  border-radius: 2px;
  font-family: "Liberation Mono", monospace;
  font-size: 5.6px;
  line-height: 8.5px;
  color: #999;
}

.code b {
  font-weight: normal;
  color: #b0475c;
}

.code em {
  font-style: normal;
  color: #4d88ad;
}

.code-one {
  height: 17px;
}

.code-five {
  height: 50px;
}

.note {
  margin: 5px -4px 0 0;
  background: #dff0d8;
  border-radius: 2px;
  color: #5a7a5a;
}

.note-one {
  height: 34px;
  padding: 6px 0 0 22px;
  line-height: 10px;
}

.note-two {
  height: 24px;
  display: flex;
  align-items: center;
  gap: 2px;
  padding-left: 11px;
}

.ic-warn {
  width: 9px;
  height: 8px;
}

.scroll {
  height: 3px;
  background: #ccc;
}

.scroll-main {
  width: 274px;
  height: 3px;
  background: #2db5ad;
}

/* red callout inner */
.gray-band {
  height: 27px;
  background: #eee;
  border-bottom: 1px solid #ddd;
}

.pills {
  height: 38px;
  display: flex;
  align-items: flex-start;
  gap: 17px;
  background: #fff;
  padding: 6px 0 0 6px;
}

.css-btn-big {
  width: 80px;
  height: 24px;
  margin: 0;
  padding-left: 9px;
  gap: 7px;
  font-size: 8.5px;
}

.css-btn-big .ic-cog {
  width: 9px;
  height: 9px;
}

.dot {
  width: 9px;
  height: 9px;
  border-radius: 50%;
  background: #fff;
}

.pill-link {
  display: flex;
  align-items: center;
  gap: 6px;
  height: 24px;
  color: #5b7a99;
}

.pill-link .ic-cog {
  width: 9px;
  height: 9px;
}

.info {
  height: 21px;
  display: flex;
  align-items: center;
  gap: 6px;
  padding-left: 4px;
  background: #d9ecfb;
  border-left: 3px solid #2196f3;
  border-bottom: 1px solid #c5ccd2;
  color: #3f8fd6;
}

.ic-info {
  width: 11px;
  height: 11px;
}
```
